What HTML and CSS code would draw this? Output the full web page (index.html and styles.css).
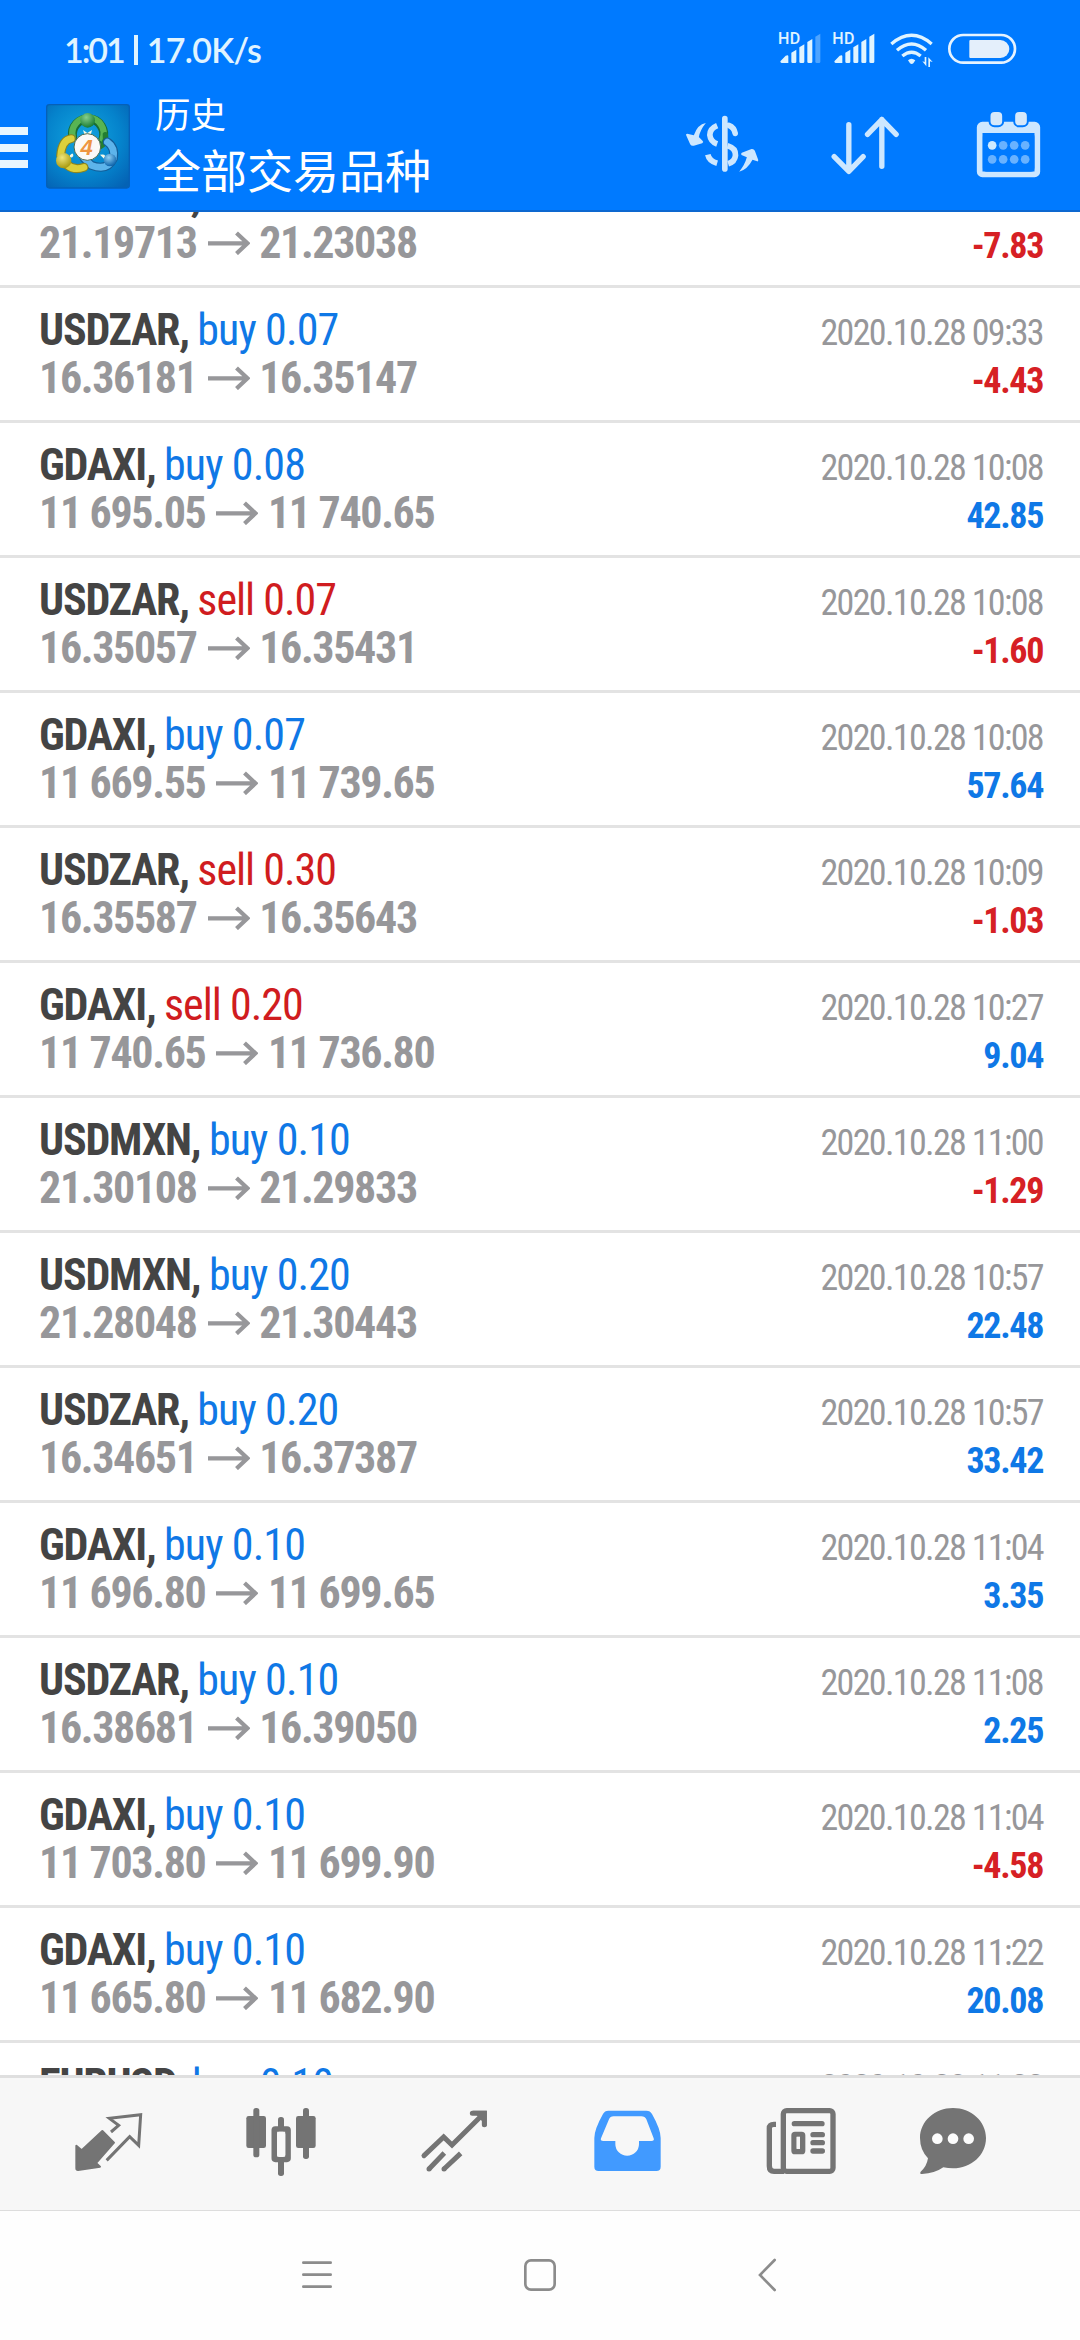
FILE: index.html
```html
<!DOCTYPE html>
<html lang="zh-CN">
<head>
<meta charset="utf-8">
<title>历史</title>
<link rel="stylesheet" href="styles.css">
</head>
<body>
<svg width="0" height="0" class="defs">
  <symbol id="arrow" viewBox="0 0 42 24"><path d="M0 12.3H38M28.5 2l11 10.3-11 10.3" fill="none" stroke="currentColor" stroke-width="4.2"/></symbol>
</svg>
<header class="header">
  <div class="status">
    <div class="status-text"><span class="clock">1:01</span><i class="divider"></i><span>17.0K/s</span></div>
    <svg class="status-icons" viewBox="410 90 720 120" width="240" height="40">
      <g fill="#e0f4ff">
        <text class="hd" x="413" y="132">HD</text>
        <text class="hd" x="576" y="132">HD</text>
        <path d="M420 184l16-17q8-4 8 2v20h-20q-4 0-4-5zM453 158l15-9v36q0 4-4 4h-7q-4 0-4-4zM477 142l15-9v52q0 4-4 4h-7q-4 0-4-4zM501 126l15-9v68q0 4-4 4h-7q-4 0-4-4z"/>
        <path d="M525 110l15-9v84q0 4-4 4h-7q-4 0-4-4z" opacity=".35"/>
        <path d="M582 184l16-17q8-4 8 2v20h-20q-4 0-4-5zM615 158l15-9v36q0 4-4 4h-7q-4 0-4-4zM639 142l15-9v52q0 4-4 4h-7q-4 0-4-4zM663 126l15-9v68q0 4-4 4h-7q-4 0-4-4zM687 110l15-9v84q0 4-4 4h-7q-4 0-4-4z"/>
        <path d="M803 181q10-9 22 0l-6 9q-5 4-10 0z"/>
        <path d="M858 171v28l-12-15 7 2v-15zM864 201v-29l13 14-8-2v17z"/>
      </g>
      <g fill="none" stroke="#e0f4ff" stroke-width="10" stroke-linecap="butt">
        <path d="M753 132q61-52 121 0"/>
        <path d="M770 151q44-38 87 0"/>
        <path d="M786 168q28-23 55 0"/>
      </g>
      <rect x="927" y="105" width="197" height="83" rx="41.500" fill="none" stroke="#e6f3ff" stroke-width="8"/>
      <path d="M990 120h90a27 27 0 0 1 0 54h-90q-3 0-3-3v-48q0-3 3-3z" fill="#e4effb"/>
    </svg>
  </div>
  <div class="bar">
    <div class="burger"><i></i><i></i><i></i></div>
    <svg class="logo" viewBox="48 42 252 255" width="84" height="85">
      <defs>
        <radialGradient id="bg" cx=".45" cy=".4" r=".75"><stop offset="0" stop-color="#12a6e0"/><stop offset=".6" stop-color="#0583cc"/><stop offset="1" stop-color="#0462b4"/></radialGradient>
        <radialGradient id="gh" cx=".4" cy=".3" r=".7"><stop offset="0" stop-color="#86cf8d"/><stop offset="1" stop-color="#1b7d35"/></radialGradient>
        <radialGradient id="yh" cx=".4" cy=".3" r=".7"><stop offset="0" stop-color="#efe67a"/><stop offset="1" stop-color="#a89a10"/></radialGradient>
        <radialGradient id="bh" cx=".4" cy=".3" r=".7"><stop offset="0" stop-color="#8fd0f5"/><stop offset="1" stop-color="#0d64ac"/></radialGradient>
      </defs>
      <rect x="50" y="44" width="248" height="250" rx="8" fill="url(#bg)" stroke="#0560b8" stroke-width="4"/>
      <g fill="none" stroke-linecap="round">
        <path d="M128 142A47 47 0 1 1 218 150" stroke="#196d35" stroke-width="27"/>
        <path d="M128 140A47 47 0 1 1 218 146" stroke="#58b453" stroke-width="19"/>
        <path d="M226 134Q232 165 196 176" stroke="#237e31" stroke-width="16"/>
        <path d="M232 156Q256 172 250 206Q232 244 184 226L162 204" stroke="#145e98" stroke-width="27"/>
        <path d="M232 156Q256 172 250 206Q232 244 184 226L162 204" stroke="#5db4eb" stroke-width="20"/>
        <path d="M124 146Q96 150 92 196Q114 248 162 232" stroke="#8c8520" stroke-width="27"/>
        <path d="M124 146Q96 150 92 196Q114 248 162 232" stroke="#dcd03c" stroke-width="20"/>
      </g>
      <path d="M120 196q10-12 10 2q-6 8-10 2zM210 194q22-4 12 12zM159 120l13 9 14-9-4 16h-18z" fill="#f4f8e8"/>
      <circle cx="173" cy="91" r="22" fill="url(#gh)"/>
      <circle cx="101" cy="212" r="23" fill="url(#yh)"/>
      <circle cx="240" cy="210" r="19" fill="url(#bh)"/>
      <circle cx="172" cy="171" r="40" fill="#fbf9f7" stroke="#4b6a50" stroke-width="3"/>
      <text x="170" y="195" class="four">4</text>
    </svg>
    <div class="titles">
      <div class="sub">历史</div>
      <div class="main">全部交易品种</div>
    </div>
    <svg viewBox="132 270 1073 360" width="358" height="120" class="actions">
      <g fill="#cde7ff">
        <path d="M197 369Q172 373 161 406L141 401Q136 401 138 406L150 433Q154 439 161 437L186 430Q192 426 187 422L176 411Q180 390 197 369z"/>
        <path d="M297 515Q322 508 337 479L351 484Q355 485 354 479L344 452Q341 446 334 447L305 458Q301 461 304 465L320 472Q314 495 297 515z"/>
      </g>
      <g fill="none" stroke="#cde7ff" stroke-width="17" stroke-linecap="round">
        <path d="M254 356V507"/>
        <path d="M231 377Q209 386 209 405Q211 425 231 432" stroke-linecap="butt"/>
        <path d="M266 376Q282 382 285 400"/>
        <path d="M262 437Q287 444 286 466Q284 485 264 491" stroke-linecap="butt"/>
        <path d="M203 464Q207 483 231 490" stroke-linecap="butt"/>
        <path d="M626 374V513M582 470l44 44 43-44M725 499V358M682 403l43-44 43 44" stroke-width="16" stroke-linejoin="round"/>
      </g>
      <rect x="1018.500" y="374" width="173" height="149" rx="8" fill="none" stroke="#cde7ff" stroke-width="17"/>
      <path d="M1020 375h171v24h-171z" fill="#cde7ff"/>
      <rect x="1028" y="399" width="155" height="116" rx="12" fill="#007aff"/>
      <g fill="#d6e8fa" stroke="#007aff" stroke-width="6">
        <rect x="1048" y="333" width="41" height="46" rx="15"/><rect x="1122" y="333" width="41" height="46" rx="15"/>
      </g>
      <g fill="#69b2ff"><circle cx="1056" cy="436" r="13" fill="#cfeaff"/><circle cx="1089" cy="436" r="13"/><circle cx="1122" cy="436" r="13"/><circle cx="1155" cy="436" r="13"/><circle cx="1056" cy="478" r="13"/><circle cx="1089" cy="478" r="13"/><circle cx="1122" cy="478" r="13"/><circle cx="1155" cy="478" r="13"/></g>
    </svg>
  </div>
</header>
<main class="list">
  <section class="deal"><div class="line"><div><b>USDMXN,</b><span class="sell">sell 0.07</span></div><time>2020.10.28 09:33</time></div><div class="line"><div class="price">21.19713<svg><use href="#arrow"/></svg>21.23038</div><strong class="loss">-7.83</strong></div></section>
  <section class="deal"><div class="line"><div><b>USDZAR,</b><span class="buy">buy 0.07</span></div><time>2020.10.28 09:33</time></div><div class="line"><div class="price">16.36181<svg><use href="#arrow"/></svg>16.35147</div><strong class="loss">-4.43</strong></div></section>
  <section class="deal"><div class="line"><div><b>GDAXI,</b><span class="buy">buy 0.08</span></div><time>2020.10.28 10:08</time></div><div class="line"><div class="price">11 695.05<svg><use href="#arrow"/></svg>11 740.65</div><strong>42.85</strong></div></section>
  <section class="deal"><div class="line"><div><b>USDZAR,</b><span class="sell">sell 0.07</span></div><time>2020.10.28 10:08</time></div><div class="line"><div class="price">16.35057<svg><use href="#arrow"/></svg>16.35431</div><strong class="loss">-1.60</strong></div></section>
  <section class="deal"><div class="line"><div><b>GDAXI,</b><span class="buy">buy 0.07</span></div><time>2020.10.28 10:08</time></div><div class="line"><div class="price">11 669.55<svg><use href="#arrow"/></svg>11 739.65</div><strong>57.64</strong></div></section>
  <section class="deal"><div class="line"><div><b>USDZAR,</b><span class="sell">sell 0.30</span></div><time>2020.10.28 10:09</time></div><div class="line"><div class="price">16.35587<svg><use href="#arrow"/></svg>16.35643</div><strong class="loss">-1.03</strong></div></section>
  <section class="deal"><div class="line"><div><b>GDAXI,</b><span class="sell">sell 0.20</span></div><time>2020.10.28 10:27</time></div><div class="line"><div class="price">11 740.65<svg><use href="#arrow"/></svg>11 736.80</div><strong>9.04</strong></div></section>
  <section class="deal"><div class="line"><div><b>USDMXN,</b><span class="buy">buy 0.10</span></div><time>2020.10.28 11:00</time></div><div class="line"><div class="price">21.30108<svg><use href="#arrow"/></svg>21.29833</div><strong class="loss">-1.29</strong></div></section>
  <section class="deal"><div class="line"><div><b>USDMXN,</b><span class="buy">buy 0.20</span></div><time>2020.10.28 10:57</time></div><div class="line"><div class="price">21.28048<svg><use href="#arrow"/></svg>21.30443</div><strong>22.48</strong></div></section>
  <section class="deal"><div class="line"><div><b>USDZAR,</b><span class="buy">buy 0.20</span></div><time>2020.10.28 10:57</time></div><div class="line"><div class="price">16.34651<svg><use href="#arrow"/></svg>16.37387</div><strong>33.42</strong></div></section>
  <section class="deal"><div class="line"><div><b>GDAXI,</b><span class="buy">buy 0.10</span></div><time>2020.10.28 11:04</time></div><div class="line"><div class="price">11 696.80<svg><use href="#arrow"/></svg>11 699.65</div><strong>3.35</strong></div></section>
  <section class="deal"><div class="line"><div><b>USDZAR,</b><span class="buy">buy 0.10</span></div><time>2020.10.28 11:08</time></div><div class="line"><div class="price">16.38681<svg><use href="#arrow"/></svg>16.39050</div><strong>2.25</strong></div></section>
  <section class="deal"><div class="line"><div><b>GDAXI,</b><span class="buy">buy 0.10</span></div><time>2020.10.28 11:04</time></div><div class="line"><div class="price">11 703.80<svg><use href="#arrow"/></svg>11 699.90</div><strong class="loss">-4.58</strong></div></section>
  <section class="deal"><div class="line"><div><b>GDAXI,</b><span class="buy">buy 0.10</span></div><time>2020.10.28 11:22</time></div><div class="line"><div class="price">11 665.80<svg><use href="#arrow"/></svg>11 682.90</div><strong>20.08</strong></div></section>
  <section class="deal"><div class="line"><div><b>EURUSD,</b><span class="buy">buy 0.10</span></div><time>2020.10.28 11:22</time></div></section>
</main>
<nav class="tabs">
  <svg viewBox="66 144 519 396" width="173" height="132">
    <g fill="#747474" stroke="#747474" stroke-width="6" stroke-linejoin="round">
      <path d="M307 303l35 35-54 61 12 11-66 10q-5 0-5-5v-68l16 14z"/>
      <path d="M333 306l23-20-28-21 94-11-6 92-27-26-69 71" fill="none" stroke-width="9" stroke-linejoin="miter"/>
    </g>
  </svg>
  <svg viewBox="585 144 519 396" width="173" height="132" fill="#747474">
    <rect x="739" y="258" width="59" height="96" rx="7"/><rect x="760" y="234" width="18" height="148" rx="8"/>
    <rect x="888" y="258" width="59" height="96" rx="7"/><rect x="909" y="234" width="18" height="153" rx="8"/>
    <rect x="834" y="261" width="18" height="40" rx="8"/><rect x="834" y="385" width="18" height="53" rx="8"/>
    <rect x="823" y="297" width="41" height="91" rx="3" fill="none" stroke="#747474" stroke-width="17"/><rect x="831" y="305" width="25" height="76" rx="7" fill="#f7f7f7"/>
  </svg>
  <svg viewBox="-96 144 519 396" width="173" height="132" fill="none" stroke="#747474" stroke-width="15" stroke-linecap="round">
    <path d="M72 377L131 321l25 24 90-89"/><path d="M217 250h36v34" stroke-width="15"/><path d="M235 250h18v20z" fill="#747474"/><path d="M87 417l46-48M132 417l50-47" stroke-linecap="butt"/><path d="M87 417h.1M132 417h.1"/>
  </svg>
  <svg viewBox="423 144 519 396" width="173" height="132">
    <path fill-rule="evenodd" fill="#419aff" d="M625 242h114q12 0 17 10Q782 298 782 324v86q0 13-13 13H596q-13 0-13-13v-86Q583 298 609 252q5-10 16-10zM641 259q-11 0-14 9l-24 57q-3 8 7 8h36v9a35 35 0 0 0 71 0v-9h37q10 0 7-8l-22-57q-4-9-15-9z"/>
  </svg>
  <svg viewBox="42 144 519 396" width="173" height="132" fill="none" stroke="#747474" stroke-width="16">
    <rect x="250" y="242" width="149" height="182" rx="10"/>
    <path d="M228 283h-6q-14 0-14 12v113q0 16 14 16h30"/>
    <path d="M283 281h83M339 314h28M339 338h28M339 363h28" stroke-linecap="round"/>
    <rect x="282" y="313" width="26" height="52" rx="3"/><path d="M290 320h10v36h-10z" fill="#f7f7f7" stroke="none"/>
  </svg>
  <svg viewBox="561 144 396 396" width="132" height="132" fill="#747474">
    <path d="M759 234C813 234 858 273 858 324C858 376 813 415 759 415Q744 415 730 412Q705 430 666 432Q658 432 662 425Q680 410 684 385Q660 360 660 324C660 273 705 234 759 234z"/>
    <g fill="#fcfcfc"><circle cx="712" cy="326" r="16"/><circle cx="759" cy="326" r="16"/><circle cx="806" cy="326" r="16"/></g>
  </svg>
</nav>
<footer class="sysnav">
  <svg viewBox="615 543 675 387" width="225" height="129"><path d="M910 698h82M910 734h82M910 770h82"/></svg>
  <svg viewBox="90 543 675 387" width="225" height="129"><rect x="376" y="691" width="88" height="88" rx="17"/></svg>
  <svg viewBox="-135 543 675 387" width="225" height="129"><path d="M224 690l-44 45 44 45"/></svg>
</footer>
</body>
</html>
```
FILE: styles.css
```css
* { box-sizing: border-box; }
body {
  margin: 0;
  width: 1080px;
  height: 2340px;
  display: flex;
  flex-direction: column;
  overflow: hidden;
  background: #fff;
  font-family: Roboto, "Noto Sans CJK SC", sans-serif;
}
svg { display: block; flex: none; }
.defs { position: absolute; }

.header {
  flex: none;
  height: 212px;
  background: #007aff;
  border-bottom: 2px solid #0d68d0;
}
.status {
  height: 90px;
  display: flex;
  justify-content: space-between;
  padding: 30px 63px 0 64px;
}
.status-text {
  display: flex;
  height: 40px;
  font: 600 34px/40px Lato, sans-serif;
  letter-spacing: -0.7px;
  color: #e0f4ff;
}
.clock { letter-spacing: -2px; }
.divider { width: 4px; height: 30px; margin: 5px 9px 0 10px; background: #e0f4ff; }
.hd { font: 500 48px Roboto, sans-serif; letter-spacing: 1px; }
.bar { height: 120px; display: flex; }
.burger { width: 28px; margin: 37px 18px 0 0; }
.burger i { display: block; height: 8px; margin-bottom: 8.5px; background: #e8f6ff; }
.logo { margin-top: 14px; }
.four { font: italic 700 66px "Liberation Sans", sans-serif; fill: #ee9540; text-anchor: middle; }
.titles { margin-left: 25px; flex: 1; color: #fff; font-family: "Noto Sans CJK SC", sans-serif; font-weight: 400; }
.sub { font-size: 35.5px; line-height: 40px; margin-top: 3px; }
.main { font-size: 46px; line-height: 60px; margin-top: 5px; }
.actions { margin-right: 38px; }

.list { flex: none; height: 1863px; overflow: hidden; padding: 0; }
.deal {
  height: 135px;
  padding: 18px 38px 0 39px;
  border-bottom: 3px solid #e3e3e3;
  font-size: 44px;
  font-stretch: 75%;
}
.deal:first-child { margin-top: -59px; }
.line { display: flex; justify-content: space-between; align-items: baseline; height: 48.3px; line-height: 48px; white-space: pre; }
.line b { color: #444; letter-spacing: -1.2px; margin-right: 8.5px; }
.buy { color: #0f78e6; letter-spacing: -0.9px; }
.sell { color: #d01c20; letter-spacing: -1px; }
time { font-size: 36px; letter-spacing: -1.65px; color: #97979a; margin-right: -1px; }
.price { display: flex; font-weight: 700; letter-spacing: -1.35px; color: #97979a; }
.price svg { width: 42px; height: 24px; margin: 12px 9.5px 0 11px; }
.line strong { font-size: 36px; letter-spacing: -1.35px; color: #0f78e6; margin-right: -1px; }
.line .loss { color: #d62024; }

.tabs {
  flex: none;
  display: flex;
  height: 136px;
  padding-left: 22px;
  background: #f7f7f7;
  border-top: 3px solid #dfdfdf;
  border-bottom: 1px solid #ddd;
}
.sysnav { flex: none; display: flex; padding-left: 205px; background: #fefefe; }
.sysnav svg { fill: none; stroke: #8c8c8c; stroke-width: 8; stroke-linecap: round; }
```
